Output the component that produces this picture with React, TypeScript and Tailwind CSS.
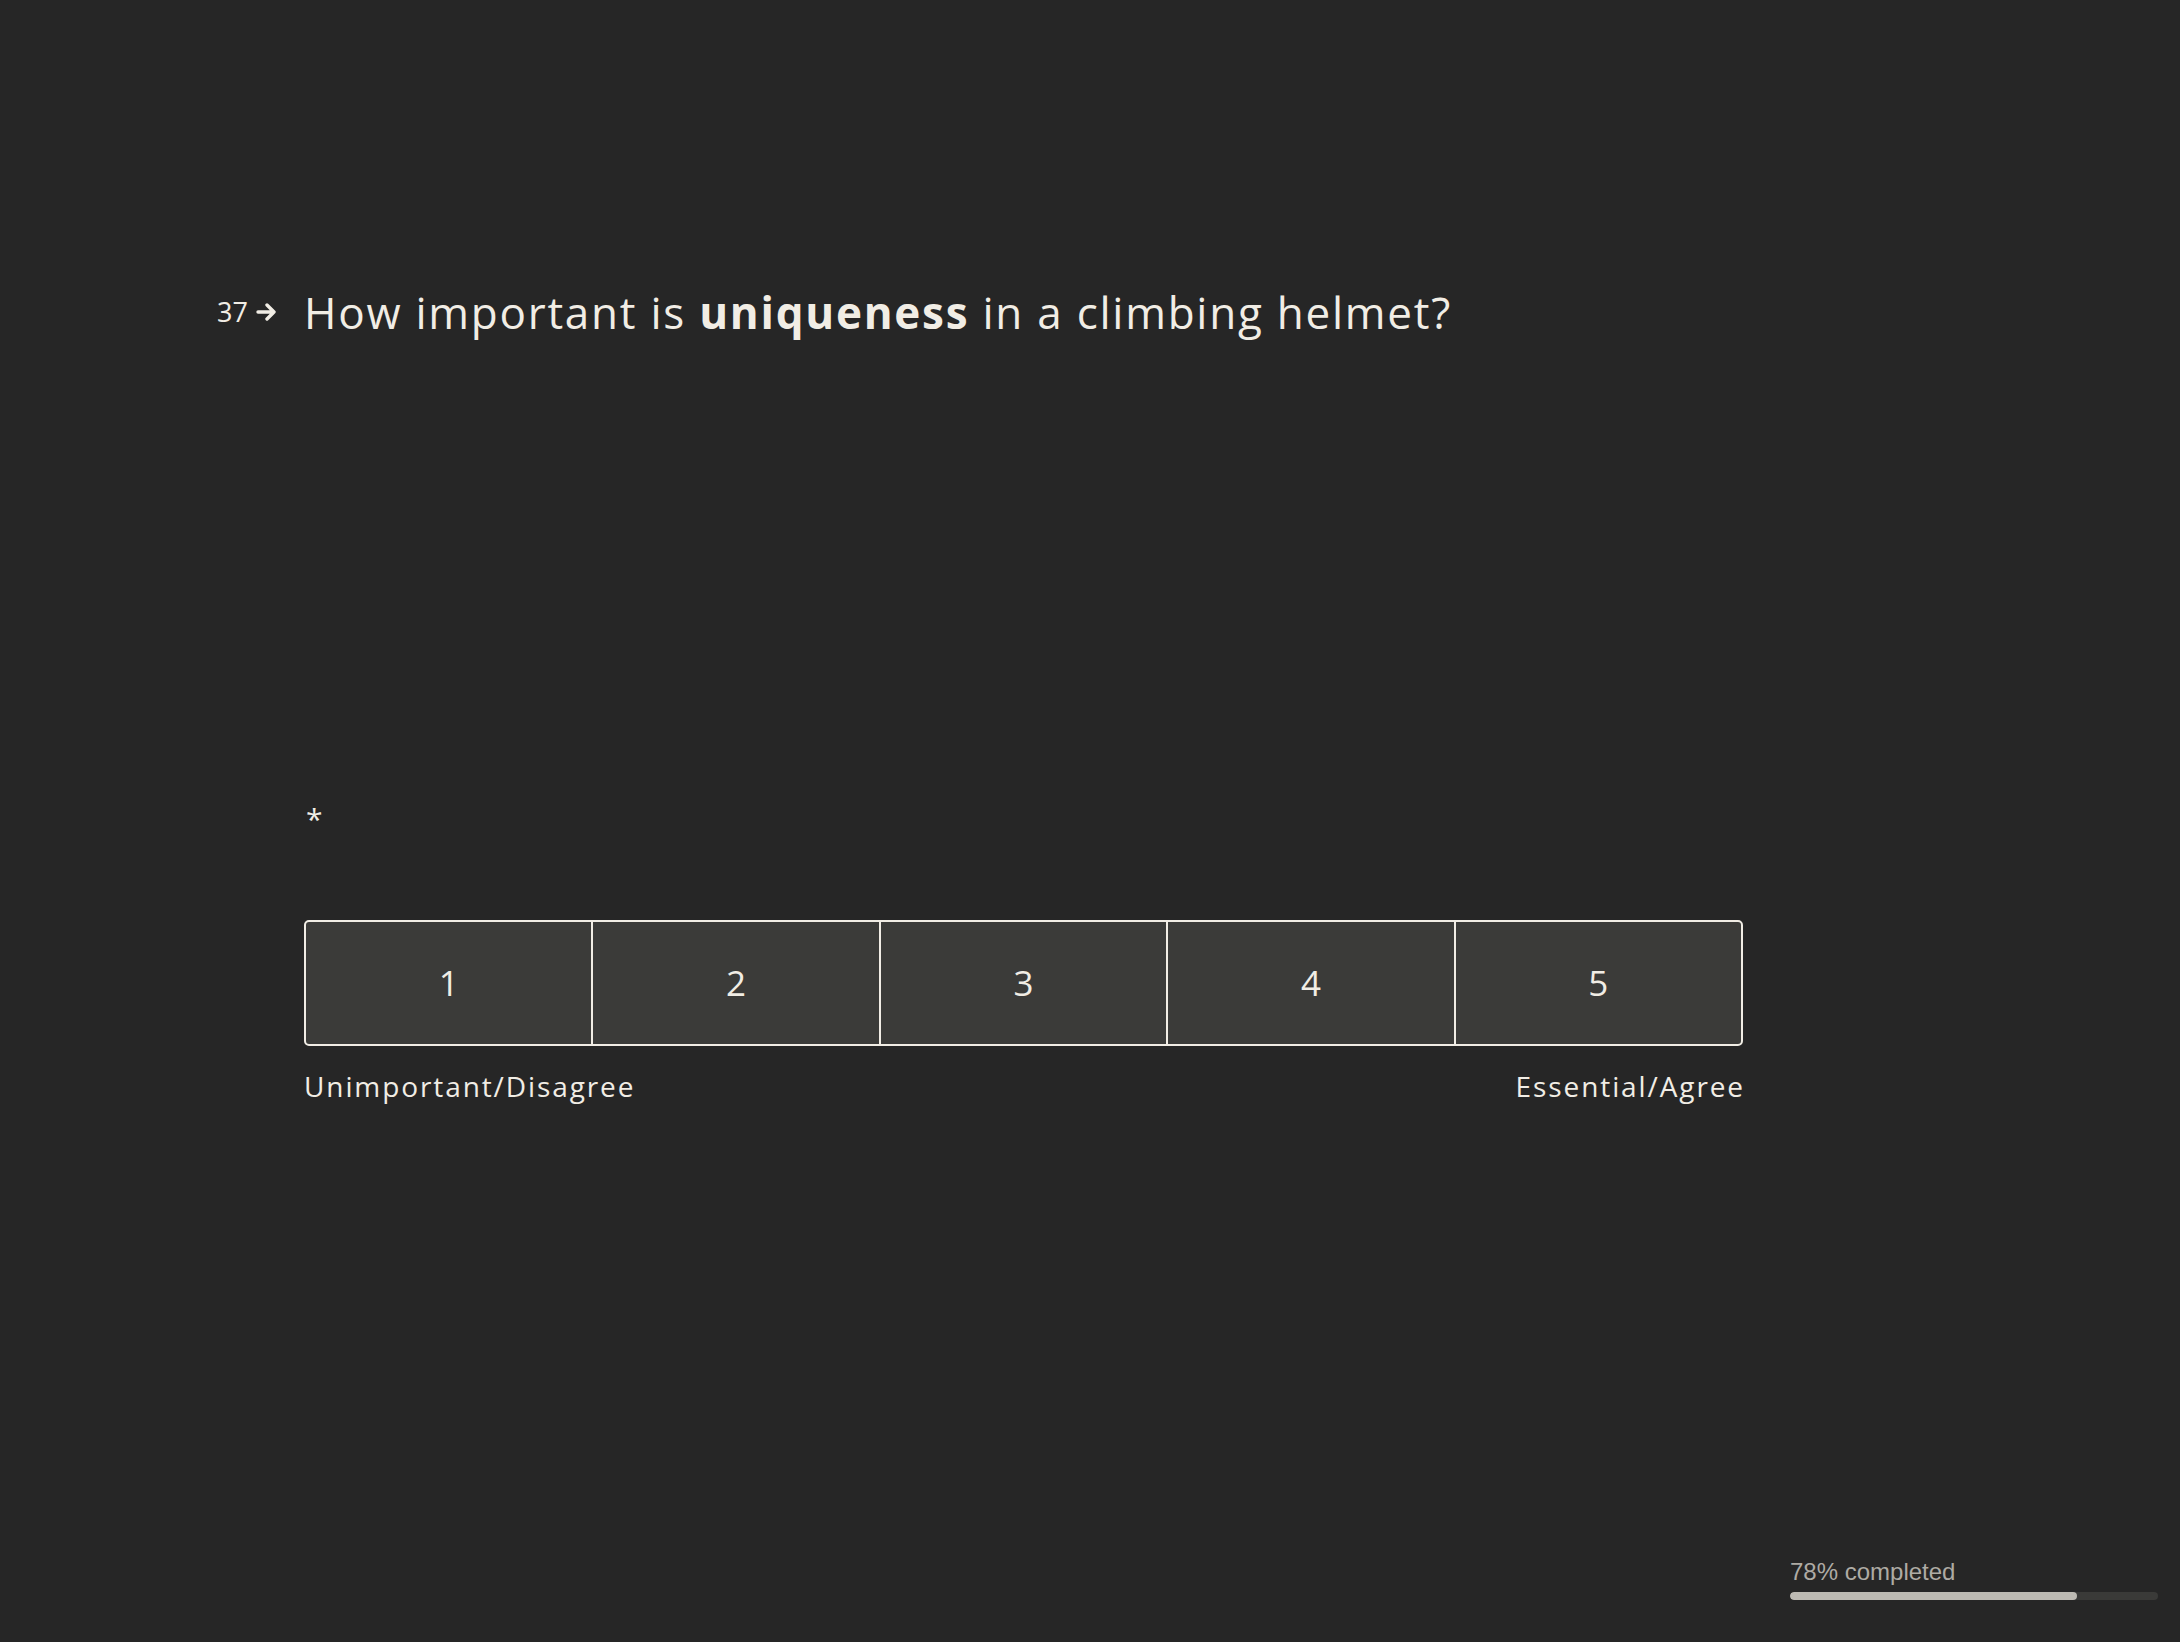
import React from "react";

export default function App() {
  const cells = [1, 2, 3, 4, 5];
  return (
    <div className="min-h-[1642px] w-full bg-[#262626] flex flex-col font-['Open_Sans',sans-serif] text-[#f1ede5]">
      <div className="flex-1 pl-[213px] pt-[283px]">
        <div className="flex items-start">
          <div className="w-[91px] flex items-center pt-[16px] pl-[4px]">
            <span className="text-[27px] leading-[26px]">37</span>
            <svg width="22" height="18" viewBox="0 0 22 18" className="ml-[8px]">
              <path d="M2 9 H18 M11 2 L18 9 L11 16" fill="none" stroke="#f1ede5" strokeWidth="3.4" strokeLinecap="round" strokeLinejoin="round" />
            </svg>
          </div>
          <h1 className="text-[44px] leading-[58px] tracking-[1.75px] font-normal">
            How important is <span className="font-bold">uniqueness</span> in a climbing helmet?
          </h1>
        </div>
        <div className="ml-[91px] w-[1439px]">
          <div className="mt-[463px] text-[30px] leading-[30px] pl-[2px]">*</div>
          <div className="mt-[86px] flex h-[126px] border-2 border-[#f1ede5] rounded-[5px] bg-[#3b3b39] overflow-hidden">
            {cells.map((n, i) => (
              <div
                key={n}
                className={
                  "flex-1 flex items-center justify-center text-[35px] " +
                  (i > 0 ? "border-l-2 border-[#f1ede5]" : "")
                }
              >
                {n}
              </div>
            ))}
          </div>
          <div className="flex justify-between pt-[23px] text-[28px] leading-[34px] tracking-[1.9px]">
            <span>Unimportant/Disagree</span>
            <span className="-mr-[2px]">Essential/Agree</span>
          </div>
        </div>
      </div>
      <div className="flex justify-end pr-[22px] pb-[42px]">
        <div className="w-[368px]">
          <div className="font-['Liberation_Sans',Arial,sans-serif] text-[24px] leading-[28px] text-[#aeaba4] pb-[6px]">
            78% completed
          </div>
          <div className="h-[8px] w-full rounded-full bg-[#3a3a38] overflow-hidden">
            <div className="h-full bg-[#bdbab3] rounded-full" style={{ width: "78%" }} />
          </div>
        </div>
      </div>
    </div>
  );
}
